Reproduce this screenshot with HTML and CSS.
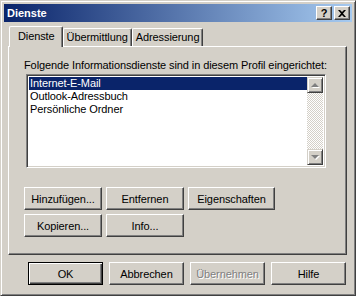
FILE: index.html
```html
<!DOCTYPE html>
<html lang="de">
<head>
    <title>Dienste</title>
    <link rel="stylesheet" href="styles.css">
</head>
<body>
    <div class="window">
        <div class="titlebar">
            <span class="title">Dienste</span>
            <div class="caption-buttons">
                <span class="cap-btn">?</span>
                <span class="cap-btn close">
                    <svg width="8" height="7" viewBox="0 0 8 7"><path d="M0 0h2l2 2 2-2h2L5 3.5 8 7H6L4 5 2 7H0l3-3.5z" fill="#000"/></svg>
                </span>
            </div>
        </div>

        <div class="tabs">
            <span class="tab active">Dienste</span>
            <span class="tab">Übermittlung</span>
            <span class="tab">Adressierung</span>
        </div>

        <div class="panel">
            <div class="label">Folgende Informationsdienste sind in diesem Profil eingerichtet:</div>
            <div class="listbox">
                <ul class="items">
                    <li class="selected">Internet-E-Mail</li>
                    <li>Outlook-Adressbuch</li>
                    <li>Persönliche Ordner</li>
                </ul>
                <div class="scrollbar">
                    <span class="arrow up"><i></i></span>
                    <span class="track"></span>
                    <span class="arrow down"><i></i></span>
                </div>
            </div>
            <div class="btn-row first">
                <button class="btn">Hinzufügen...</button>
                <button class="btn">Entfernen</button>
                <button class="btn wide">Eigenschaften</button>
            </div>
            <div class="btn-row">
                <button class="btn">Kopieren...</button>
                <button class="btn">Info...</button>
            </div>
        </div>

        <div class="footer">
            <button class="btn default">OK</button>
            <button class="btn">Abbrechen</button>
            <button class="btn disabled">Übernehmen</button>
            <button class="btn">Hilfe</button>
        </div>
    </div>
</body>
</html>
```

FILE: styles.css
```css
html, body {
    margin: 0;
    padding: 0;
    background: #d4d0c8;
}

body {
    font-family: "Liberation Sans", Arial, sans-serif;
    font-size: 11px;
    letter-spacing: -0.1px;
    color: #000;
}

.window {
    width: 356px;
    height: 296px;
    box-sizing: border-box;
    background: #d4d0c8;
    border: 1px solid;
    border-color: #d4d0c8 #404040 #404040 #d4d0c8;
    box-shadow: inset 1px 1px #fff, inset -1px -1px #808080;
    padding: 3px 3px;
}

.titlebar {
    height: 18px;
    display: flex;
    align-items: center;
    justify-content: space-between;
    background: linear-gradient(to right, #0a246a, #a6caf0);
    padding: 0 2px 0 3px;
}

.title {
    color: #fff;
    font-weight: bold;
    font-size: 11px;
    letter-spacing: 0;
}

.caption-buttons {
    display: flex;
    gap: 2px;
}

.cap-btn {
    width: 16px;
    height: 14px;
    box-sizing: border-box;
    background: #d4d0c8;
    border: 1px solid;
    border-color: #fff #404040 #404040 #fff;
    box-shadow: inset -1px -1px #808080;
    display: flex;
    align-items: center;
    justify-content: center;
    font-weight: bold;
    font-size: 11px;
    line-height: 1;
}

/* tabs */
.tabs {
    display: flex;
    height: 20px;
    align-items: flex-end;
    margin: 4px 0 0 5px;
    position: relative;
    z-index: 1;
}

.tab {
    height: 18px;
    box-sizing: border-box;
    padding: 2px 3px 0 3px;
    border: 1px solid;
    border-color: #fff #404040 transparent #fff;
    border-bottom: 0;
    box-shadow: inset -1px 0 #808080;
    border-radius: 2px 2px 0 0;
    background: #d4d0c8;
}

.tab.active {
    height: 21px;
    margin-bottom: -1px;
    padding: 3px 7px 0 8px;
}

.panel {
    width: 339px;
    height: 209px;
    box-sizing: border-box;
    margin-left: 4px;
    border: 1px solid;
    border-color: #fff #404040 #404040 #fff;
    box-shadow: inset -1px -1px #808080;
    padding: 12px 0 0 15px;
}

.label {
    height: 14px;
    line-height: 13px;
}

.listbox {
    display: flex;
    width: 300px;
    height: 94px;
    box-sizing: border-box;
    margin: 1px 0 0 2px;
    background: #fff;
    border: 1px solid;
    border-color: #808080 #fff #fff #808080;
    box-shadow: inset 1px 1px #404040, inset -1px -1px #d4d0c8;
    padding: 2px;
}

.items {
    list-style: none;
    margin: 0;
    padding: 0;
    flex: 1;
}

.items li {
    height: 13px;
    line-height: 13px;
    padding-left: 1px;
}

.items li.selected {
    background: #0a246a;
    color: #fff;
}

.scrollbar {
    width: 16px;
    display: flex;
    flex-direction: column;
}

.scrollbar .track {
    flex: 1;
    background: repeating-conic-gradient(#fff 0 25%, #d4d0c8 0 50%) 0 0 / 2px 2px;
}

.arrow {
    height: 16px;
    box-sizing: border-box;
    background: #d4d0c8;
    border: 1px solid;
    border-color: #d4d0c8 #404040 #404040 #d4d0c8;
    box-shadow: inset 1px 1px #fff, inset -1px -1px #808080;
    display: flex;
    align-items: center;
    justify-content: center;
}

.arrow i {
    width: 0;
    height: 0;
    border-left: 4px solid transparent;
    border-right: 4px solid transparent;
    filter: drop-shadow(1px 1px #fff);
}

.arrow.up i {
    border-bottom: 4px solid #808080;
}

.arrow.down i {
    border-top: 4px solid #808080;
}

/* buttons */
.btn-row {
    display: flex;
    gap: 4px;
    margin-top: 4px;
}

.btn-row.first {
    margin-top: 19px;
}

.btn {
    width: 78px;
    height: 23px;
    box-sizing: border-box;
    font-family: inherit;
    font-size: 11px;
    letter-spacing: inherit;
    color: #000;
    background: #d4d0c8;
    border: 1px solid;
    border-color: #fff #404040 #404040 #fff;
    box-shadow: inset -1px -1px #808080;
    padding: 0;
    margin: 0;
}

.btn.wide {
    width: 87px;
}

.footer {
    display: flex;
    gap: 6px;
    margin: 7px 0 0 24px;
}

.footer .btn {
    width: 75px;
}

.btn.default {
    border: 1px solid #000;
    box-shadow: inset 1px 1px #fff, inset -1px -1px #404040, inset -2px -2px #808080;
}

.btn.disabled {
    color: #808080;
    text-shadow: 1px 1px #fff;
}
```
